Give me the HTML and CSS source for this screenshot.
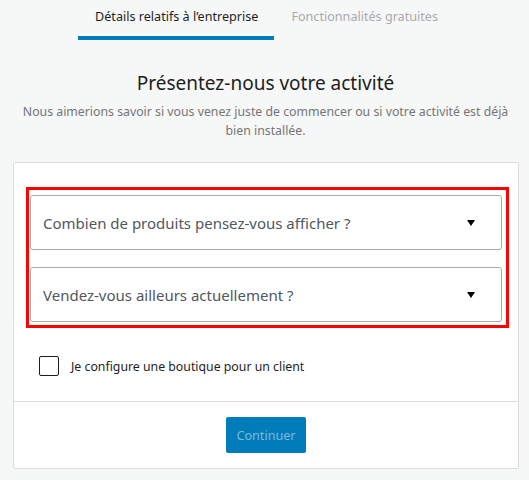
FILE: index.html
```html
<!DOCTYPE html>
<html lang="fr">
<head>
<meta charset="utf-8">
<link rel="stylesheet" href="styles.css">
</head>
<body>
<nav class="tabs">
  <div class="tab active">Détails relatifs à l’entreprise</div>
  <div class="tab">Fonctionnalités gratuites</div>
</nav>
<header class="intro">
  <h1 class="title">Présentez-nous votre activité</h1>
  <p class="subtitle">Nous aimerions savoir si vous venez juste de commencer ou si votre activité est déjà bien installée.</p>
</header>
<section class="card">
  <div class="card-body">
    <div class="highlight">
      <div class="select">
        <span class="select-label">Combien de produits pensez-vous afficher ?</span>
        <svg class="caret" width="8" height="6" viewBox="0 0 8 6"><path d="M0 0h8L4 6z" fill="#000"/></svg>
      </div>
      <div class="select">
        <span class="select-label">Vendez-vous ailleurs actuellement ?</span>
        <svg class="caret" width="8" height="6" viewBox="0 0 8 6"><path d="M0 0h8L4 6z" fill="#000"/></svg>
      </div>
    </div>
    <label class="check">
      <span class="box"></span>
      <span class="check-label">Je configure une boutique pour un client</span>
    </label>
  </div>
  <div class="card-footer">
    <button class="btn">Continuer</button>
  </div>
</section>
</body>
</html>
```
FILE: styles.css
```css
* { box-sizing: border-box; }
html, body { margin: 0; padding: 0; }
body {
  background: #f6f7f7;
  font-family: "Noto Sans", "Open Sans", sans-serif;
  color: #1e1e1e;
  width: 529px;
  height: 480px;
  overflow: hidden;
}
.tabs {
  display: flex;
  justify-content: center;
  padding: 7px 0 0 3px;
}
.tab {
  font-size: 12.6px;
  line-height: 20px;
  padding: 0 16px 9px 17px;
  color: #a7aaad;
  border-bottom: 4px solid transparent;
}
.tab.active {
  color: #1e1e1e;
  border-bottom-color: #007cba;
}
.intro {
  text-align: center;
  padding: 29px 18px 0 20px;
}
.title {
  margin: 0;
  font-size: 19px;
  font-weight: 400;
  line-height: 28px;
  color: #1e1e1e;
}
.subtitle {
  margin: 5px 0 0;
  font-size: 12.3px;
  line-height: 19px;
  color: #757575;
}
.card {
  margin: 22px 0 0 13px;
  width: 506px;
  background: #fff;
  border: 1px solid #dcdcde;
  border-radius: 2px;
}
.card-body {
  padding: 24px 9px 25px 12px;
}
.highlight {
  border: 3px solid #ff0000;
  padding: 5px 4px 3px 1px;
  display: flex;
  flex-direction: column;
  gap: 17px;
}
.select {
  height: 55px;
  border: 1px solid #a7aaad;
  border-radius: 3px;
  display: flex;
  align-items: center;
  padding: 0 26px 0 12px;
  background: #fff;
}
.select-label {
  flex: 1;
  font-size: 15px;
  color: #50575e;
}
.caret { display: block; }
.check {
  display: flex;
  align-items: center;
  margin: 28px 0 0 13px;
  gap: 12px;
}
.box {
  width: 20px;
  height: 20px;
  border: 1px solid #1e1e1e;
  border-radius: 2px;
  background: #fff;
}
.check-label {
  font-size: 12.3px;
  color: #1e1e1e;
}
.card-footer {
  border-top: 1px solid #dcdcde;
  display: flex;
  justify-content: center;
  padding: 15px 0 15px;
}
.btn {
  width: 80px;
  height: 36px;
  border: 0;
  border-radius: 2px;
  background: #007cba;
  color: #7fb8d9;
  font-family: inherit;
  font-size: 12.6px;
  padding: 0;
}
```
